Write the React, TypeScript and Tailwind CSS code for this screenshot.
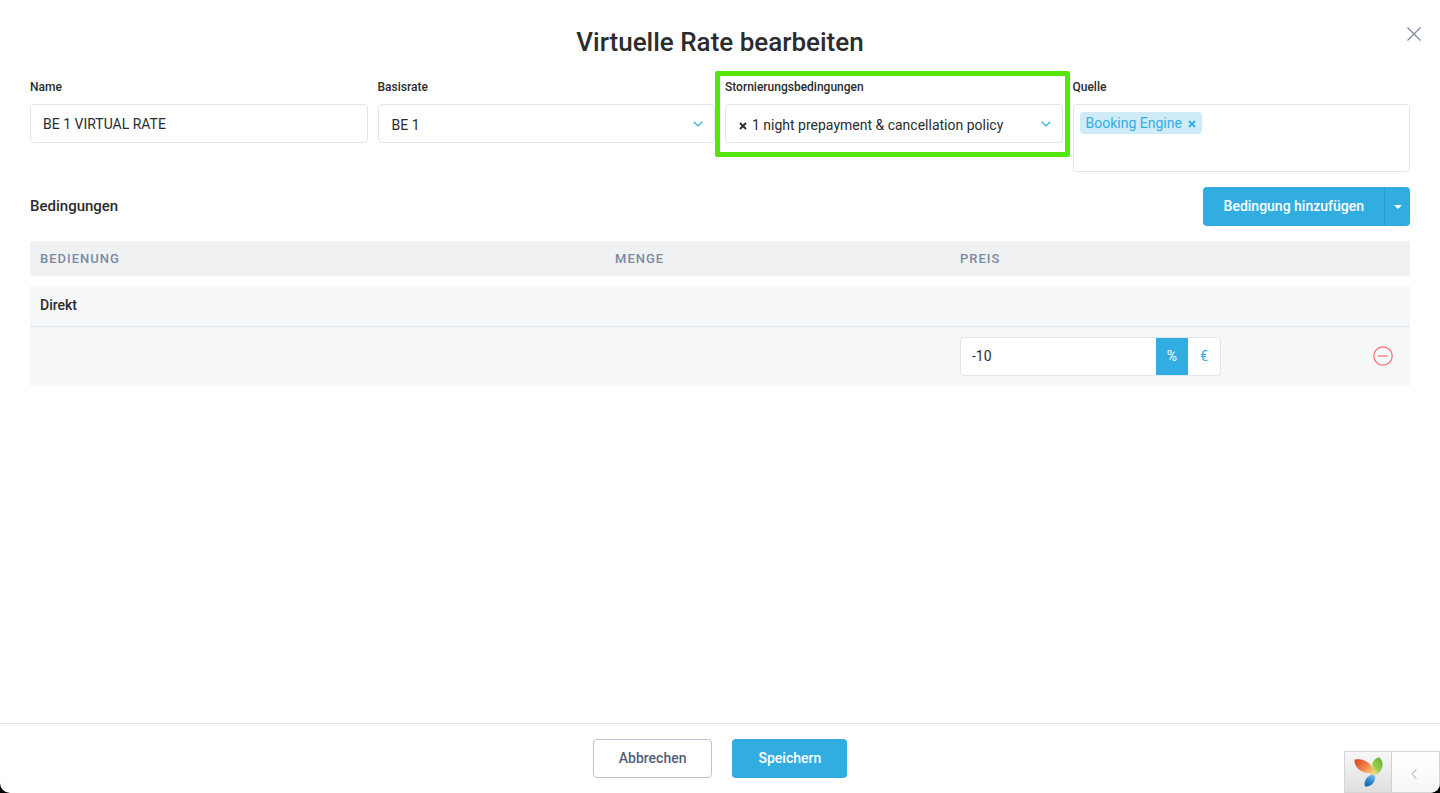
import { useState } from 'react'
import type { ReactNode } from 'react'

interface FieldProps {
  id: string
  label: string
  highlighted?: boolean
  children: ReactNode
}

function Field({ id, label, highlighted, children }: FieldProps) {
  return (
    <div className="relative min-w-0">
      <label htmlFor={id} className="block text-[12px] leading-4 font-medium mb-[9px]">
        {label}
      </label>
      {children}
      {highlighted && (
        <div className="pointer-events-none absolute -top-2 -left-[10px] -right-[7px] h-[86px] rounded-xs border-[5px] border-[#55e60a]" />
      )}
    </div>
  )
}

function ChevronDown() {
  return (
    <svg
      className="pointer-events-none absolute top-[17px] right-3 h-[6px] w-[10px] text-[#32ade2]"
      viewBox="0 0 10 6"
      fill="none"
      stroke="currentColor"
      strokeWidth="1.3"
    >
      <path d="M0.7 0.8 5 4.9 9.3 0.8" />
    </svg>
  )
}

function Cross({ className }: { className: string }) {
  return (
    <svg className={className} viewBox="0 0 8 8" fill="none" stroke="currentColor" strokeWidth="1.9">
      <path d="M1 1 7 7M7 1 1 7" />
    </svg>
  )
}

function YiiLogo() {
  return (
    <svg className="h-[30px] w-[29px]" viewBox="0 0 29 30">
      <defs>
        <linearGradient id="leaf-orange" x1="0" y1="0.1" x2="1" y2="0.9">
          <stop offset="0" stopColor="#d9472c" />
          <stop offset="0.5" stopColor="#ee8748" />
          <stop offset="1" stopColor="#fde68a" />
        </linearGradient>
        <linearGradient id="leaf-green" x1="0.8" y1="0" x2="0.2" y2="1">
          <stop offset="0" stopColor="#65b233" />
          <stop offset="0.6" stopColor="#9ccc4c" />
          <stop offset="1" stopColor="#e3eda0" />
        </linearGradient>
        <linearGradient id="leaf-blue" x1="0.7" y1="0" x2="0.3" y2="1">
          <stop offset="0" stopColor="#7fc4ec" />
          <stop offset="0.6" stopColor="#2b86cb" />
          <stop offset="1" stopColor="#1766ad" />
        </linearGradient>
      </defs>
      <path fill="url(#leaf-blue)" d="M20.5 16.5C15.5 17.5 11.3 21 10.6 26 10.5 27.800 10.800 29 11.400 29.700 16.500 29.700 20.900 26 21.200 20.800 21.200 19.300 21 17.800 20.500 16.500Z" />
      <path fill="url(#leaf-green)" d="M25 0.300C28.300 2.500 29.300 7 28 11 26.700 14.500 24.200 17.200 21.300 18.700 21.200 16.300 20.300 14.300 19 12.600 16.800 7 19.300 1.500 25 0.300Z" />
      <path fill="url(#leaf-orange)" d="M0.500 2.700C6.500 1.200 13 3.500 17 8.300 19.700 11.500 21.200 15 21.100 19.200 18.300 15.500 14.500 16.800 10 15.300 4 13 0.300 8.500 0.500 2.700Z" />
    </svg>
  )
}

const fieldBox = 'block w-full rounded-[4px] border border-[#e0e6ef] bg-white text-[14px]'

export default function App() {
  const [name, setName] = useState('BE 1 VIRTUAL RATE')
  const [price, setPrice] = useState('-10')
  const [unit, setUnit] = useState('%')

  return (
    <div className="bg-black font-[Roboto,sans-serif] text-[#2b2c2e]">
      <div className="relative flex min-h-screen flex-col overflow-hidden rounded-b-[10px] bg-white">
        <main className="flex-1 px-[30px] pt-[26px]">
          <h1 className="text-center text-[26px] leading-8 font-medium">Virtuelle Rate bearbeiten</h1>
          <button type="button" aria-label="Schließen" className="absolute top-[27px] right-[19px] text-[#76829b]">
            <svg className="h-[14px] w-[14px]" viewBox="0 0 14 14" fill="none" stroke="currentColor" strokeWidth="1.1">
              <path d="M0.500 0.500 13.500 13.500M13.500 0.500 0.500 13.500" />
            </svg>
          </button>

          {/* Rate settings */}
          <div className="mt-[21px] grid grid-cols-4 gap-[10px]">
            <Field id="name" label="Name">
              <input
                id="name"
                value={name}
                onChange={(e) => setName(e.target.value)}
                className={`${fieldBox} h-[39px] px-3`}
              />
            </Field>
            <Field id="base-rate" label="Basisrate">
              <div className="relative">
                <select id="base-rate" className={`${fieldBox} h-[39px] appearance-none pt-[3px] pr-8 pl-[13px]`}>
                  <option>BE 1</option>
                </select>
                <ChevronDown />
              </div>
            </Field>
            <Field id="policy" label="Stornierungsbedingungen" highlighted>
              <div className="relative">
                <select id="policy" className={`${fieldBox} h-[39px] appearance-none pt-[3px] pr-8 pl-[26px]`}>
                  <option>1 night prepayment &amp; cancellation policy</option>
                </select>
                <button type="button" aria-label="Auswahl entfernen" className="absolute top-[18px] left-[14px]">
                  <Cross className="h-2 w-2" />
                </button>
                <ChevronDown />
              </div>
            </Field>
            <Field id="source" label="Quelle">
              <div className={`${fieldBox} flex h-[68px] items-start px-[6px] py-[7px]`}>
                <span className="flex h-[22px] items-center gap-[6px] rounded-[4px] bg-[#d0ebf8] px-[6px] text-[#32ade2]">
                  Booking Engine
                  <button type="button" aria-label="Booking Engine entfernen">
                    <Cross className="mt-[2px] h-2 w-2" />
                  </button>
                </span>
                <input id="source" className="h-[22px] min-w-0 flex-1 px-1 outline-none" />
              </div>
            </Field>
          </div>

          {/* Conditions */}
          <div className="mt-[15px] mb-[15px] flex items-center justify-between">
            <h2 className="text-[15px] leading-5 font-medium pb-[2px]">Bedingungen</h2>
            <div className="flex h-[39px] overflow-hidden rounded-[4px] bg-[#32ade2] text-white">
              <button type="button" className="pr-5 pl-[21px] text-[14px] font-medium">
                Bedingung hinzufügen
              </button>
              <button
                type="button"
                aria-label="Weitere Optionen"
                className="flex w-[26px] items-center justify-center border-l border-[#2b9bcd]"
              >
                <span className="border-x-4 border-t-4 border-x-transparent border-t-white" />
              </button>
            </div>
          </div>

          <table className="w-full table-fixed text-left text-[14px]">
            <thead className="text-[13px] text-[#7d8aa4]">
              <tr className="h-[35px] bg-[#eff1f3] tracking-[1px]">
                <th className="w-5/12 rounded-l-xs px-[10px] font-medium">BEDIENUNG</th>
                <th className="w-3/12 px-[10px] font-medium">MENGE</th>
                <th className="w-3/12 px-[10px] font-medium">PREIS</th>
                <th className="w-1/12" />
              </tr>
            </thead>
            <tbody className="before:block before:h-[10px]">
              <tr className="h-10 border-b border-[#e0e6ef] bg-[#f5f7f9]">
                <th colSpan={4} className="px-[10px] font-medium">
                  Direkt
                </th>
              </tr>
              <tr className="bg-[#f5f7f9]">
                <td />
                <td />
                <td className="p-[10px]">
                  <div className="flex h-[39px] w-[261px] overflow-hidden rounded-[4px] border border-[#e0e6ef] bg-white">
                    <input
                      aria-label="Preis"
                      value={price}
                      onChange={(e) => setPrice(e.target.value)}
                      className="min-w-0 flex-1 px-[11px]"
                    />
                    {['%', '€'].map((symbol) => (
                      <button
                        key={symbol}
                        type="button"
                        aria-pressed={unit === symbol}
                        onClick={() => setUnit(symbol)}
                        className={`w-8 ${unit === symbol ? 'bg-[#32ade2] text-white' : 'text-[#32ade2]'}`}
                      >
                        {symbol}
                      </button>
                    ))}
                  </div>
                </td>
                <td className="pr-[17px]">
                  <button type="button" aria-label="Bedingung entfernen" className="block ml-auto text-[#f4777a]">
                    <svg className="h-5 w-5" viewBox="0 0 20 20" fill="none" stroke="currentColor" strokeWidth="1.3">
                      <circle cx="10" cy="10" r="9.200" />
                      <path d="M5 10H15" />
                    </svg>
                  </button>
                </td>
              </tr>
            </tbody>
          </table>
        </main>

        <footer className="flex h-[70px] items-center justify-center gap-5 border-t border-[#e0e6ef] text-[14px] font-medium">
          <button type="button" className="h-[39px] rounded-[4px] border border-[#bac3d3] px-[25px] text-[#525f7a]">
            Abbrechen
          </button>
          <button type="button" className="h-[39px] rounded-[4px] bg-[#32ade2] px-[26px] text-white">
            Speichern
          </button>
        </footer>

        {/* Debug toolbar */}
        <div className="absolute right-0 bottom-0 flex h-[42px] w-24 border border-[#d5d5d5] bg-linear-to-b from-[#f7f7f7] to-[#dfdfdf]">
          <a href="#debug" aria-label="Debugger" className="flex w-[46px] items-center justify-center">
            <YiiLogo />
          </a>
          <button
            type="button"
            aria-label="Leiste öffnen"
            className="flex flex-1 items-center justify-center border-l border-[#d0d0d0] bg-linear-to-b from-white to-[#f7f7f7] pr-1 text-[#a9a9a9]"
          >
            <svg className="mt-1 h-[10px] w-[6px]" viewBox="0 0 6 10" fill="none" stroke="currentColor" strokeWidth="1">
              <path d="M5.500 0.500 0.800 5 5.500 9.500" />
            </svg>
          </button>
        </div>
      </div>
    </div>
  )
}
